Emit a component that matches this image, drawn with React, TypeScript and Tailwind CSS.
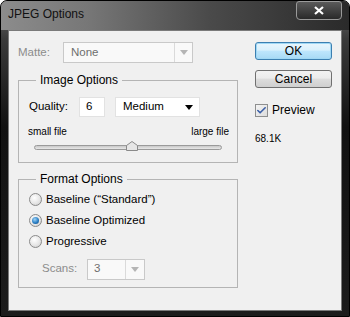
import { Check } from 'lucide-react';

const font = { fontFamily: '"Liberation Sans", Arial, sans-serif' };

function Arrow({ color = '#000' }: { color?: string }) {
  return (
    <svg width="8" height="5" viewBox="0 0 8 5">
      <path d="M0 0h8L4 5z" fill={color} />
    </svg>
  );
}

function Radio({ checked }: { checked?: boolean }) {
  return (
    <div className="w-[13px] h-[13px] rounded-full border border-[#8a8a8a] bg-[radial-gradient(circle_at_40%_35%,#ffffff_0%,#e6e6e6_55%,#c9c9c9_100%)] flex items-center justify-center shrink-0">
      {checked && (
        <div className="w-[7px] h-[7px] rounded-full bg-[radial-gradient(circle_at_40%_35%,#9fd3f7_0%,#2a7fc4_55%,#0b3f77_100%)]" />
      )}
    </div>
  );
}

function GroupBox({
  title,
  className,
  children,
}: {
  title: string;
  className: string;
  children: React.ReactNode;
}) {
  return (
    <div className={`border border-[#b4b4b4] ${className}`}>
      <div className="-mt-[9px] ml-[17px] px-[4px] w-fit bg-[#f0f0f0] text-[12px] leading-[16px] text-black">
        {title}
      </div>
      {children}
    </div>
  );
}

export default function App() {
  return (
    <div
      className="w-[350px] h-[317px] rounded-t-[7px] border border-black flex flex-col overflow-hidden bg-[linear-gradient(to_bottom,#6e6e6e_0%,#3a3a3a_12%,#111111_40%,#1c1c1c_100%)]"
      style={font}
    >
      {/* title bar */}
      <div className="h-[29px] shrink-0 flex items-start justify-between bg-[linear-gradient(to_right,#8c8c8c_0%,#777777_25%,#4a4a4a_60%,#2a2a2a_100%)]">
        <div className="pl-[7px] pt-[5px] text-[12px] leading-[16px] text-[#111]">JPEG Options</div>
        <div className="mr-[7px] w-[46px] h-[19px] rounded-b-[4px] rounded-t-[3px] border border-[#9a9a9a] bg-[linear-gradient(to_bottom,#5a5a5a,#2a2a2a)] flex items-center justify-center">
          <svg width="10" height="9" viewBox="0 0 10 9">
            <path d="M1 1l8 7M9 1L1 8" stroke="#fff" strokeWidth="2.2" />
          </svg>
        </div>
      </div>

      {/* client area */}
      <div className="mx-[7px] mb-[5px] flex-1 border border-[#7a7a7a] bg-[#f0f0f0] flex pl-[9px] pt-[11px] text-[11.5px] text-black">
        {/* left column */}
        <div className="w-[220px] flex flex-col">
          <div className="h-[21px] flex items-center">
            <div className="w-[45px] text-[#8c8c8c]">Matte:</div>
            <div className="w-[130px] h-[21px] border border-[#c9c9c9] bg-[#f9f9f9] flex items-center">
              <div className="flex-1 pl-[7px] text-[#6e6e6e]">None</div>
              <div className="w-[18px] h-full border-l border-[#dadada] flex items-center justify-center">
                <Arrow color="#b5b5b5" />
              </div>
            </div>
          </div>

          <GroupBox title="Image Options" className="mt-[17px] h-[83px]">
            <div className="mt-[9px] h-[20px] flex items-center pl-[10px]">
              <div className="w-[50px]">Quality:</div>
              <div className="w-[26px] h-[20px] bg-white border border-[#e2e2e2] flex items-center pl-[6px]">6</div>
              <div className="ml-[10px] w-[85px] h-[20px] bg-white border border-[#e2e2e2] flex items-center justify-between pl-[7px] pr-[6px]">
                <span>Medium</span>
                <Arrow />
              </div>
            </div>
            <div className="mt-[9px] flex justify-between pl-[9px] pr-[8px] text-[10px] leading-[12px]">
              <span>small file</span>
              <span>large file</span>
            </div>
            <div className="mt-[3px] mx-[15px] h-[12px] flex flex-col justify-center">
              <div className="h-[5px] rounded-full border border-[#9a9a9a] bg-[linear-gradient(to_bottom,#c8c8c8,#e8e8e8)] flex items-center">
                <div className="ml-[91px] -mt-[3px]">
                  <svg width="12" height="10" viewBox="0 0 12 10">
                    <path d="M0.5 9.5V4.5L6 0.5L11.5 4.5V9.5Z" fill="#e6e6e6" stroke="#8a8a8a" />
                  </svg>
                </div>
              </div>
            </div>
          </GroupBox>

          <GroupBox title="Format Options" className="mt-[16px] h-[109px]">
            <div className="mt-[6px] flex flex-col gap-[8px] pl-[10px]">
              <div className="h-[13px] flex items-center gap-[4px]">
                <Radio />
                <span>Baseline (“Standard”)</span>
              </div>
              <div className="h-[13px] flex items-center gap-[4px]">
                <Radio checked />
                <span>Baseline Optimized</span>
              </div>
              <div className="h-[13px] flex items-center gap-[4px]">
                <Radio />
                <span>Progressive</span>
              </div>
            </div>
            <div className="mt-[11px] h-[20px] flex items-center pl-[23px]">
              <div className="w-[45px] text-[#8c8c8c]">Scans:</div>
              <div className="w-[58px] h-[21px] border border-[#c9c9c9] bg-[#f9f9f9] flex items-center">
                <div className="flex-1 pl-[6px] text-[#6e6e6e]">3</div>
                <div className="w-[19px] h-full border-l border-[#dadada] flex items-center justify-center">
                  <Arrow color="#b5b5b5" />
                </div>
              </div>
            </div>
          </GroupBox>
        </div>

        {/* right column */}
        <div className="ml-[17px] w-[77px] flex flex-col">
          <button className="h-[18px] rounded-[3px] border border-[#3c7fb1] bg-[linear-gradient(to_bottom,#eaf6fd_0%,#d9f0fc_45%,#bee6fd_50%,#a7d9f5_100%)] shadow-[inset_0_0_0_1px_#a0d8f5] text-[12px] leading-[16px] text-black">
            OK
          </button>
          <button className="mt-[10px] h-[18px] rounded-[3px] border border-[#707070] bg-[linear-gradient(to_bottom,#f2f2f2_0%,#ebebeb_45%,#dddddd_50%,#cfcfcf_100%)] text-[12px] leading-[16px] text-black">
            Cancel
          </button>
          <div className="mt-[14px] flex items-center gap-[4px]">
            <div className="w-[13px] h-[13px] border border-[#8e8f8f] bg-[linear-gradient(135deg,#f4f4f4,#dcdcdc)] flex items-center justify-center">
              <Check size={11} strokeWidth={3.5} color="#3a5fa8" />
            </div>
            <span className="text-[12px] leading-[16px]">Preview</span>
          </div>
          <div className="mt-[15px] text-[10px] leading-[12px]">68.1K</div>
        </div>
      </div>
    </div>
  );
}
